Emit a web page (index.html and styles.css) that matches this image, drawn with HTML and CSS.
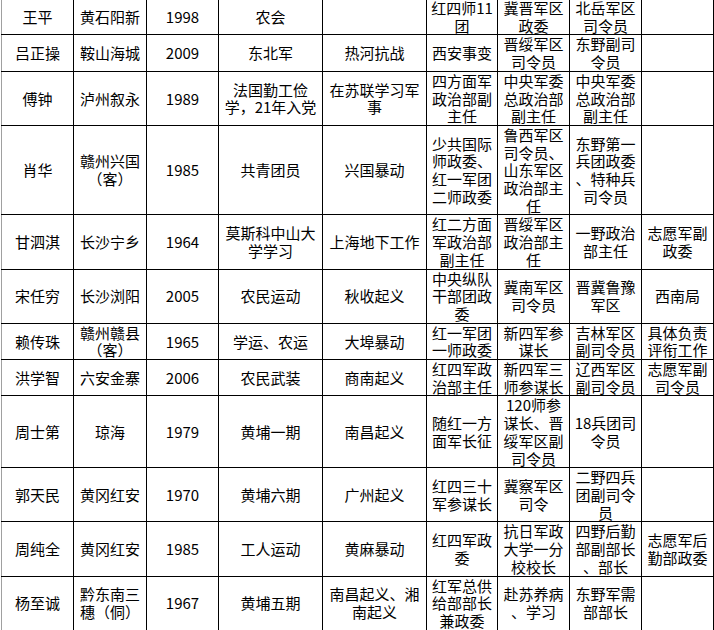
FILE: index.html
```html
<!DOCTYPE html>
<html lang="zh-CN">
<head>
<meta charset="utf-8">
<title>将领表</title>
<link rel="stylesheet" href="styles.css">
</head>
<body>
<table class="roster">
  <colgroup>
    <col class="c1"><col class="c2"><col class="c3"><col class="c4"><col class="c5"><col class="c6"><col class="c7"><col class="c8"><col class="c9">
  </colgroup>
  <tbody>
    <tr class="r2">
      <td>王平</td><td>黄石阳新</td><td>1998</td><td>农会</td><td></td>
      <td>红四师11<br>团</td><td>冀晋军区<br>政委</td><td>北岳军区<br>司令员</td><td></td>
    </tr>
    <tr class="r2">
      <td>吕正操</td><td>鞍山海城</td><td>2009</td><td>东北军</td><td>热河抗战</td>
      <td>西安事变</td><td>晋绥军区<br>司令员</td><td>东野副司<br>令员</td><td></td>
    </tr>
    <tr class="r3">
      <td>傅钟</td><td>泸州叙永</td><td>1989</td><td>法国勤工俭<br>学，21年入党</td><td>在苏联学习军<br>事</td>
      <td>四方面军<br>政治部副<br>主任</td><td>中央军委<br>总政治部<br>副主任</td><td>中央军委<br>总政治部<br>副主任</td><td></td>
    </tr>
    <tr class="r5">
      <td>肖华</td><td>赣州兴国<br>（客）</td><td>1985</td><td>共青团员</td><td>兴国暴动</td>
      <td>少共国际<br>师政委、<br>红一军团<br>二师政委</td><td>鲁西军区<br>司令员、<br>山东军区<br>政治部主<br>任</td><td>东野第一<br>兵团政委<br>、特种兵<br>司令员</td><td></td>
    </tr>
    <tr class="r3">
      <td>甘泗淇</td><td>长沙宁乡</td><td>1964</td><td>莫斯科中山大<br>学学习</td><td>上海地下工作</td>
      <td>红二方面<br>军政治部<br>副主任</td><td>晋绥军区<br>政治部主<br>任</td><td>一野政治<br>部主任</td><td>志愿军副<br>政委</td>
    </tr>
    <tr class="r3">
      <td>宋任穷</td><td>长沙浏阳</td><td>2005</td><td>农民运动</td><td>秋收起义</td>
      <td>中央纵队<br>干部团政<br>委</td><td>冀南军区<br>司令员</td><td>晋冀鲁豫<br>军区</td><td>西南局</td>
    </tr>
    <tr class="r2">
      <td>赖传珠</td><td>赣州赣县<br>（客）</td><td>1965</td><td>学运、农运</td><td>大埠暴动</td>
      <td>红一军团<br>一师政委</td><td>新四军参<br>谋长</td><td>吉林军区<br>副司令员</td><td>具体负责<br>评衔工作</td>
    </tr>
    <tr class="r2">
      <td>洪学智</td><td>六安金寨</td><td>2006</td><td>农民武装</td><td>商南起义</td>
      <td>红四军政<br>治部主任</td><td>新四军三<br>师参谋长</td><td>辽西军区<br>副司令员</td><td>志愿军副<br>司令员</td>
    </tr>
    <tr class="r4">
      <td>周士第</td><td>琼海</td><td>1979</td><td>黄埔一期</td><td>南昌起义</td>
      <td>随红一方<br>面军长征</td><td>120师参<br>谋长、晋<br>绥军区副<br>司令员</td><td>18兵团司<br>令员</td><td></td>
    </tr>
    <tr class="r3">
      <td>郭天民</td><td>黄冈红安</td><td>1970</td><td>黄埔六期</td><td>广州起义</td>
      <td>红四三十<br>军参谋长</td><td>冀察军区<br>司令</td><td>二野四兵<br>团副司令<br>员</td><td></td>
    </tr>
    <tr class="r3">
      <td>周纯全</td><td>黄冈红安</td><td>1985</td><td>工人运动</td><td>黄麻暴动</td>
      <td>红四军政<br>委</td><td>抗日军政<br>大学一分<br>校校长</td><td>四野后勤<br>部副部长<br>、部长</td><td>志愿军后<br>勤部政委</td>
    </tr>
    <tr class="r3">
      <td>杨至诚</td><td>黔东南三<br>穗（侗）</td><td>1967</td><td>黄埔五期</td><td>南昌起义、湘<br>南起义</td>
      <td>红军总供<br>给部部长<br>兼政委</td><td>赴苏养病<br>、学习</td><td>东野军需<br>部部长</td><td></td>
    </tr>
  </tbody>
</table>
</body>
</html>
```

FILE: styles.css
```css
html, body {
  margin: 0;
  padding: 0;
  background: #ffffff;
}

body {
  overflow: hidden;
}

.roster {
  margin: -2px 0 0 1px;
  width: 713px;
  table-layout: fixed;
  border-collapse: collapse;
  font-family: "Noto Sans CJK SC", "Noto Sans", sans-serif;
  font-size: 15px;
  line-height: 17.7px;
  color: #000000;
}

.c1 { width: 72px; }
.c2 { width: 73px; }
.c3 { width: 72px; }
.c4 { width: 104px; }
.c5 { width: 104px; }
.c6 { width: 71px; }
.c7 { width: 72px; }
.c8 { width: 72px; }
.c9 { width: 72px; }

.roster td {
  border: 1px solid #000000;
  padding: 0;
  text-align: center;
  vertical-align: middle;
  white-space: nowrap;
  overflow: hidden;
}

.roster td:first-child {
  border-left-color: #a0a0a0;
}

.r2 td { height: 35.4px; }
.r3 td { height: 53.1px; }
.r4 td { height: 70.8px; }
.r5 td { height: 88.5px; }
```
